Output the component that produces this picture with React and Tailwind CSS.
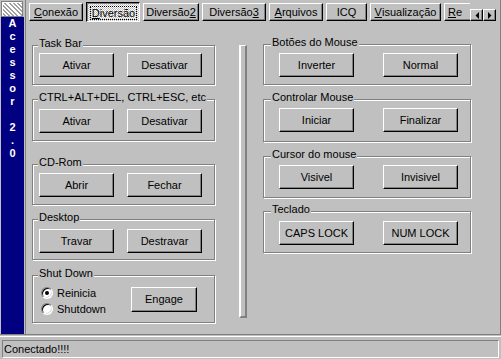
import React from "react";

// Win95-ish bevels
const raised =
  "bg-[#c0c0c0] border border-t-white border-l-white border-r-black border-b-black shadow-[inset_-1px_-1px_0_#808080]";
const sunken =
  "border border-t-[#808080] border-l-[#808080] border-r-white border-b-white";

const tabs = [
  { label: "Conexão", key: "C", w: "w-[54px]" },
  { label: "Diversão", key: "D", w: "w-[54px]", active: true },
  { label: "Diversão2", key: "2", w: "w-[56px]" },
  { label: "Diversão3", key: "3", w: "w-[64px]" },
  { label: "Arquivos", key: "A", w: "w-[54px]" },
  { label: "ICQ", key: null, w: "w-[41px]" },
  { label: "Visualização", key: "V", w: "w-[71px]" },
  { label: "Re", key: "R", w: "w-[60px] justify-start pl-[3px]" },
];

// underline the accelerator letter (first match)
const Caption = ({ label, accel }) => {
  if (!accel) return label;
  const i = label.indexOf(accel);
  return (
    <>
      {label.slice(0, i)}
      <u className="underline decoration-1 underline-offset-1">{accel}</u>
      {label.slice(i + 1)}
    </>
  );
};

const Button = ({ label, className = "" }) => (
  <button
    className={`${raised} flex items-center justify-center shrink-0 leading-[13px] ${className}`}
  >
    {label}
  </button>
);

const GroupBox = ({ title, className = "", labelLeft = "left-[5px]", children }) => (
  <div
    className={`relative border border-[#808080] shadow-[inset_1px_1px_0_#fff,1px_1px_0_#fff] ${className}`}
  >
    <span
      className={`absolute -top-[9px] ${labelLeft} bg-[#c0c0c0] px-[1px] leading-[13px] whitespace-nowrap`}
    >
      {title}
    </span>
    {children}
  </div>
);

const ButtonPair = ({ a, b, className = "" }) => (
  <div className={`flex ${className}`}>
    <Button label={a} className="w-[75px] h-[24px]" />
    <Button label={b} className="w-[75px] h-[24px]" />
  </div>
);

const Radio = ({ label, checked }) => (
  <div className="h-[16px] flex items-center gap-[4px]">
    <span className="w-[12px] h-[12px] rounded-full bg-white border border-t-[#808080] border-l-[#808080] border-r-white border-b-white shadow-[inset_1px_1px_0_#000,inset_-1px_-1px_0_#dfdfdf] flex items-center justify-center">
      {checked && <span className="w-[4px] h-[4px] rounded-full bg-black" />}
    </span>
    <span>{label}</span>
  </div>
);

const Sidebar = () => (
  <div className="w-[25px] flex flex-col shrink-0">
    <div className="ml-[1px] mt-[1px] w-[22px] h-[16px] border border-[#808080] shadow-[inset_1px_1px_0_#fff] bg-[repeating-linear-gradient(45deg,#fff_0_1.5px,#a0a0a0_1.5px_3px)]" />
    <div className="ml-[1px] w-[23px] flex-1 bg-[#000080] flex flex-col items-center text-white font-bold text-[11px]">
      {"Acessor 2.0".split("").map((ch, i) => (
        <span key={i} className="h-[13px] leading-[13px]">
          {ch === " " ? "\u00a0" : ch}
        </span>
      ))}
    </div>
  </div>
);

const Arrow = ({ dir }) => (
  <div className={`${raised} w-[13px] h-[12px] flex items-center justify-center`}>
    <svg width="4" height="7" viewBox="0 0 4 7">
      {dir === "left" ? (
        <polygon points="4,0 4,7 0.5,3.5" fill="#000" />
      ) : (
        <polygon points="0,0 0,7 3.5,3.5" fill="#000" />
      )}
    </svg>
  </div>
);

const TabBar = () => (
  <div className="flex h-[22px]">
    <div className="w-[444px] overflow-hidden flex items-start gap-[3px] pl-[3px]">
      {tabs.map((t) =>
        t.active ? (
          <div
            key={t.label}
            className={`${t.w} shrink-0 mt-[2px] h-[20px] border border-t-black border-l-black border-r-white border-b-white shadow-[inset_1px_1px_0_#808080] bg-[conic-gradient(#fff_25%,#c0c0c0_0_50%,#fff_0_75%,#c0c0c0_0)] bg-[length:2px_2px] flex items-center justify-center pt-[1px] pl-[1px]`}
          >
            <span className="border border-dotted border-black px-[1px] leading-[12px]">
              <Caption label={t.label} accel={t.key} />
            </span>
          </div>
        ) : (
          <div
            key={t.label}
            className={`${raised} ${t.w} shrink-0 mt-[3px] h-[18px] flex items-center justify-center whitespace-nowrap`}
          >
            <Caption label={t.label} accel={t.key} />
          </div>
        )
      )}
    </div>
    <div className="flex mt-[9px]">
      <Arrow dir="left" />
      <Arrow dir="right" />
    </div>
  </div>
);

export default function App() {
  return (
    <div className="w-[501px] h-[359px] overflow-hidden bg-[#c0c0c0] flex flex-col font-['Liberation_Sans',Arial,sans-serif] text-[11px] leading-[13px] text-black">
      <div className="flex h-[335px] border-b border-[#808080]">
        <Sidebar />
        <div className="flex-1 flex flex-col border-l border-r border-[#808080]">
          <TabBar />
          <div className="flex items-start">
            {/* left column */}
            <div className="ml-[6px] w-[183px] flex flex-col">
              <GroupBox title="Task Bar" className="mt-[23px] h-[40px]">
                <ButtonPair a="Ativar" b="Desativar" className="pt-[7px] pl-[6px] gap-[13px]" />
              </GroupBox>
              <GroupBox title="CTRL+ALT+DEL, CTRL+ESC, etc" className="mt-[14px] h-[42px]">
                <ButtonPair a="Ativar" b="Desativar" className="pt-[9px] pl-[6px] gap-[13px]" />
              </GroupBox>
              <GroupBox title="CD-Rom" className="mt-[23px] h-[41px]">
                <ButtonPair a="Abrir" b="Fechar" className="pt-[8px] pl-[6px] gap-[13px]" />
              </GroupBox>
              <GroupBox title="Desktop" className="mt-[14px] h-[41px]">
                <ButtonPair a="Travar" b="Destravar" className="pt-[9px] pl-[6px] gap-[13px]" />
              </GroupBox>
              <GroupBox title="Shut Down" className="mt-[15px] h-[48px]">
                <div className="flex items-start">
                  <div className="w-[98px] pl-[8px] pt-[9px] flex flex-col">
                    <Radio label="Reinicia" checked />
                    <Radio label="Shutdown" />
                  </div>
                  <Button label="Engage" className="mt-[11px] w-[66px] h-[25px]" />
                </div>
              </GroupBox>
            </div>

            {/* splitter bar */}
            <div className="ml-[24px] mt-[23px] w-[8px] h-[273px] border-t border-l-2 border-r-2 border-b-2 border-t-white border-l-white border-r-[#808080] border-b-[#808080]" />

            {/* right column */}
            <div className="ml-[16px] w-[208px] flex flex-col">
              <GroupBox title="Botões do Mouse" labelLeft="left-[7px]" className="mt-[22px] h-[41px]">
                <ButtonPair a="Inverter" b="Normal" className="pt-[8px] pl-[15px] gap-[29px]" />
              </GroupBox>
              <GroupBox title="Controlar Mouse" labelLeft="left-[7px]" className="mt-[14px] h-[43px]">
                <ButtonPair a="Iniciar" b="Finalizar" className="pt-[8px] pl-[15px] gap-[29px]" />
              </GroupBox>
              <GroupBox title="Cursor do mouse" labelLeft="left-[7px]" className="mt-[14px] h-[42px]">
                <ButtonPair a="Visivel" b="Invisivel" className="pt-[8px] pl-[15px] gap-[29px]" />
              </GroupBox>
              <GroupBox title="Teclado" labelLeft="left-[7px]" className="mt-[13px] h-[42px]">
                <ButtonPair a="CAPS LOCK" b="NUM LOCK" className="pt-[9px] pl-[15px] gap-[29px]" />
              </GroupBox>
            </div>
          </div>
        </div>
      </div>
      <div className="mt-[1px] h-[1px] bg-white" />
      <div className={`${sunken} mx-[2px] mt-[3px] h-[18px] flex items-center pl-[1px]`}>
        Conectado!!!!
      </div>
    </div>
  );
}
